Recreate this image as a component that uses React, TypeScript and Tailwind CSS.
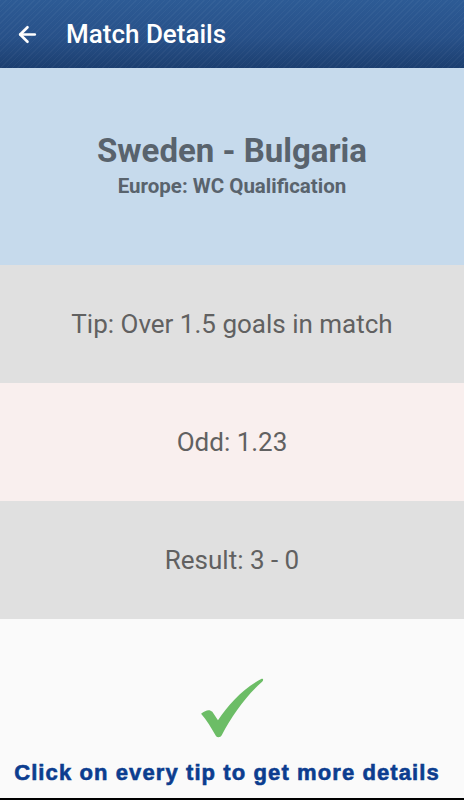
import { ArrowLeft } from "lucide-react";

const rows = [
  { label: "Tip: Over 1.5 goals in match", bg: "bg-[#e0e0e0]" },
  { label: "Odd: 1.23", bg: "bg-[#f9efee]" },
  { label: "Result: 3 - 0", bg: "bg-[#e0e0e0]" },
];

export default function App() {
  return (
    <div className="flex h-[800px] w-[464px] flex-col overflow-hidden bg-[#fafafa] font-['Roboto',sans-serif]">
      {/* Toolbar */}
      <header className="flex h-[68px] shrink-0 items-center bg-[image:repeating-linear-gradient(135deg,rgba(255,255,255,0.035)_0px,rgba(255,255,255,0.035)_1px,transparent_1px,transparent_4px),linear-gradient(180deg,#2d5b95_0%,#285189_55%,#1c3f70_100%)] shadow-[0_2px_3px_rgba(0,0,0,0.25)]">
        <ArrowLeft className="ml-[15px] h-[25px] w-[25px] text-white" strokeWidth={2.5} />
        <h1 className="ml-[26px] text-[26px] font-medium text-white">Match Details</h1>
      </header>

      {/* Match */}
      <section className="flex h-[197px] shrink-0 flex-col items-center justify-center bg-[#c6daec] pb-[4px] text-[#59636d]">
        <h2 className="text-[33px] font-bold leading-[40px]">Sweden - Bulgaria</h2>
        <p className="mt-[2px] text-[20.5px] font-bold leading-[26px]">Europe: WC Qualification</p>
      </section>

      {rows.map((r) => (
        <div
          key={r.label}
          className={`flex h-[118px] shrink-0 items-center justify-center ${r.bg} text-[26px] text-[#616161]`}
        >
          {r.label}
        </div>
      ))}

      {/* Footer */}
      <div className="flex flex-1 flex-col items-center justify-end pb-[12px]">
        <svg width="66" height="62" viewBox="0 0 70 66" className="mb-[20px] ml-[2px]">
          <path
            d="M1 38 C6 34 10 33 13 36 L19 45 C30 28 46 11 65 1 C67 0 68 2 66 4 C48 20 34 40 23 61 C22 63 19 64 17 62 C12 53 7 45 1 38 Z"
            fill="#6cbd66"
          />
        </svg>
        <p className="pr-[10px] font-['Liberation_Sans',sans-serif] text-[22px] font-black leading-[26px] tracking-[1.1px] text-[#0c3d8f] [-webkit-text-stroke:0.6px_#0c3d8f]">
          Click on every tip to get more details
        </p>
      </div>
      <div className="h-[2px] shrink-0 bg-black" />
    </div>
  );
}
